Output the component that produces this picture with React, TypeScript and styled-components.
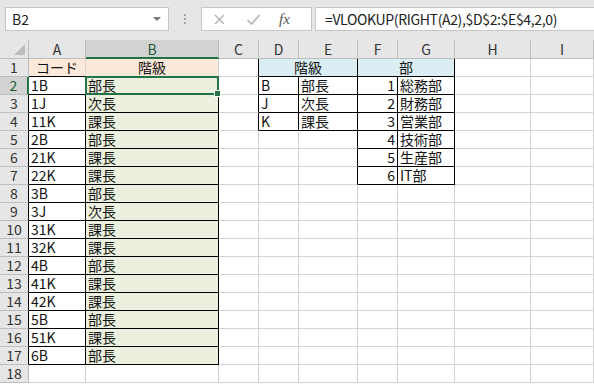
import styled, { createGlobalStyle } from "styled-components";

const GlobalStyle = createGlobalStyle`
  html, body {
    margin: 0;
    padding: 0;
    background: #ffffff;
    overflow: hidden;
  }
  body {
    font-family: "Noto Sans CJK JP", "Noto Sans", sans-serif;
  }
`;

const GREEN = "#217346";
const GRID = "#d4d4d4";
const HEAD_LINE = "#bdbdbd";

const Page = styled.div`
  width: 594px;
  height: 385px;
  overflow: hidden;
  background: #ffffff;
`;

const FormulaBar = styled.div`
  display: flex;
  align-items: flex-start;
  height: 40px;
  padding: 7px 0 0 5px;
  box-sizing: border-box;
  background: #e6e6e6;
`;

const NameBox = styled.div`
  position: relative;
  width: 164px;
  height: 24px;
  box-sizing: border-box;
  border: 1px solid #c6c6c6;
  background: #ffffff;
  padding-left: 6px;
  font-size: 14px;
  line-height: 22px;
  color: #222;
`;

const DropArrow = styled.span`
  position: absolute;
  right: 7px;
  top: 9px;
  width: 0;
  height: 0;
  border-left: 4px solid transparent;
  border-right: 4px solid transparent;
  border-top: 4px solid #777;
`;

const Grip = styled.div`
  width: 32px;
  height: 24px;
  display: flex;
  flex-direction: column;
  align-items: center;
  justify-content: center;
  gap: 2px;
`;

const GripDot = styled.span`
  width: 2px;
  height: 2px;
  background: #a6a6a6;
`;

const IconBox = styled.div`
  width: 111px;
  height: 24px;
  box-sizing: border-box;
  border: 1px solid #c6c6c6;
  background: #ffffff;
  display: flex;
  align-items: center;
  padding-left: 11px;
  gap: 20px;
`;

const FxText = styled.span`
  font-family: "Liberation Serif", serif;
  font-style: italic;
  font-size: 15px;
  color: #555;
  margin-left: -2px;
`;

const FormulaInput = styled.div`
  flex: 1;
  height: 24px;
  margin-left: 3px;
  box-sizing: border-box;
  border: 1px solid #c6c6c6;
  border-right: none;
  background: #ffffff;
  padding-left: 9px;
  font-size: 14px;
  line-height: 22px;
  letter-spacing: -0.35px;
  color: #222;
  white-space: nowrap;
`;

const Sheet = styled.div`
  position: relative;
  display: grid;
  grid-template-columns: 29px 57px 133px 40px 40px 59px 40px 57px 76px 1fr;
  grid-auto-rows: 18px;
  grid-template-rows: 19px;
  font-size: 14px;
`;

const Corner = styled.div`
  position: relative;
  background: #e6e6e6;
  border-right: 1px solid ${HEAD_LINE};
  border-bottom: 1px solid ${HEAD_LINE};
  box-sizing: border-box;
`;

const CornerTriangle = styled.span`
  position: absolute;
  right: 3px;
  bottom: 3px;
  width: 0;
  height: 0;
  border-left: 11px solid transparent;
  border-bottom: 11px solid #bcbcbc;
`;

const ColHead = styled.div<{ $sel?: boolean }>`
  box-sizing: border-box;
  background: ${(p) => (p.$sel ? "#d2d2d2" : "#e6e6e6")};
  border-right: 1px solid ${HEAD_LINE};
  border-bottom: ${(p) => (p.$sel ? `2px solid ${GREEN}` : `1px solid ${HEAD_LINE}`)};
  color: ${(p) => (p.$sel ? "#1e5e3a" : "#333")};
  text-align: center;
  line-height: 18px;
`;

const RowHead = styled.div<{ $sel?: boolean; $edge: string }>`
  box-sizing: border-box;
  background: ${(p) => (p.$sel ? "#d2d2d2" : "#e6e6e6")};
  border-right: ${(p) => (p.$sel ? `2px solid ${GREEN}` : `1px solid ${p.$edge}`)};
  border-bottom: 1px solid ${HEAD_LINE};
  color: ${(p) => (p.$sel ? "#1e5e3a" : "#333")};
  text-align: center;
  line-height: 17px;
`;

const Cell = styled.div<{
  $fill: string;
  $align: string;
  $right: string;
  $bottom: string;
  $span: number;
}>`
  box-sizing: border-box;
  grid-column: span ${(p) => p.$span};
  background: ${(p) => p.$fill};
  border-right: 1px solid ${(p) => p.$right};
  border-bottom: 1px solid ${(p) => p.$bottom};
  text-align: ${(p) => p.$align};
  padding: 0 2px 0 2px;
  line-height: 17px;
  color: #111;
  white-space: nowrap;
`;

const Selection = styled.div`
  position: absolute;
  left: 85px;
  top: 36px;
  width: 134px;
  height: 19px;
  box-sizing: border-box;
  border: 2px solid ${GREEN};
  pointer-events: none;
`;

const FillHandle = styled.span`
  position: absolute;
  right: -4px;
  bottom: -4px;
  width: 5px;
  height: 5px;
  background: ${GREEN};
  border: 1px solid #ffffff;
`;

const COLS = ["A", "B", "C", "D", "E", "F", "G", "H", "I"];

const codes = ["1B", "1J", "11K", "2B", "21K", "22K", "3B", "3J", "31K", "32K", "4B", "41K", "42K", "5B", "51K", "6B"];
const titles = ["部長", "次長", "課長", "部長", "課長", "課長", "部長", "次長", "課長", "課長", "部長", "課長", "課長", "部長", "課長", "部長"];
const lookup = [["B", "部長"], ["J", "次長"], ["K", "課長"]];
const depts = ["総務部", "財務部", "営業部", "技術部", "生産部", "IT部"];

const PEACH = "#fde9d9";
const OLIVE = "#ebf1de";
const SKY = "#daeef3";

type CellDef = { text: string; col: number; span: number; fill: string; align: string };

const rowCells = (r: number): CellDef[] => {
  const cells: CellDef[] = [];
  const put = (col: number, text: string, fill = "#ffffff", align = "left", span = 1) =>
    cells.push({ col, text, fill, align, span });

  if (r === 1) {
    put(1, "コード", PEACH, "center");
    put(2, "階級", PEACH, "center");
    put(3, "");
    put(4, "階級", SKY, "center", 2);
    put(6, "部", SKY, "center", 2);
  } else if (r <= 17) {
    put(1, codes[r - 2]);
    put(2, titles[r - 2], OLIVE);
    put(3, "");
    const lk = lookup[r - 2];
    put(4, lk ? lk[0] : "");
    put(5, lk ? lk[1] : "");
    const dp = depts[r - 2];
    put(6, dp ? String(r - 1) : "", "#ffffff", "right");
    put(7, dp ?? "");
  } else {
    [1, 2, 3, 4, 5, 6, 7].forEach((c) => put(c, ""));
  }
  put(8, "");
  put(9, "");
  return cells;
};

const rightBlack = (r: number, c: number) => {
  if (c === 0 || c === 1 || c === 2) return r >= 2 && r <= 17;
  if (c === 3) return r >= 1 && r <= 4;
  if (c === 4) return r >= 2 && r <= 4;
  if (c === 5) return r >= 1 && r <= 7;
  if (c === 6) return r >= 2 && r <= 7;
  if (c === 7) return r >= 1 && r <= 7;
  return false;
};

const bottomBlack = (r: number, c: number) => {
  if (c === 1 || c === 2) return r >= 1 && r <= 17;
  if (c === 4 || c === 5) return r >= 1 && r <= 4;
  if (c === 6 || c === 7) return r >= 1 && r <= 7;
  return false;
};

const App = () => {
  const rows = Array.from({ length: 18 }, (_, i) => i + 1);

  return (
    <Page>
      <GlobalStyle />
      <FormulaBar>
        <NameBox>
          B2
          <DropArrow />
        </NameBox>
        <Grip>
          <GripDot />
          <GripDot />
          <GripDot />
        </Grip>
        <IconBox>
          <svg width="13" height="13" viewBox="0 0 13 13">
            <path d="M2 2 L11 11 M11 2 L2 11" stroke="#b3b3b3" strokeWidth="1.4" fill="none" />
          </svg>
          <svg width="15" height="13" viewBox="0 0 15 13">
            <path d="M1.5 7 L5.5 11 L13.5 2" stroke="#b3b3b3" strokeWidth="1.6" fill="none" />
          </svg>
          <FxText>fx</FxText>
        </IconBox>
        <FormulaInput>=VLOOKUP(RIGHT(A2),$D$2:$E$4,2,0)</FormulaInput>
      </FormulaBar>
      <Sheet>
        <Corner>
          <CornerTriangle />
        </Corner>
        {COLS.map((c) => (
          <ColHead key={c} $sel={c === "B"}>
            {c}
          </ColHead>
        ))}
        {rows.map((r) => [
          <RowHead key={`h${r}`} $sel={r === 2} $edge={rightBlack(r, 0) ? "#000" : HEAD_LINE}>
            {r}
          </RowHead>,
          ...rowCells(r).map((cell) => {
            const last = cell.col + cell.span - 1;
            return (
              <Cell
                key={`${r}-${cell.col}`}
                $fill={cell.fill}
                $align={cell.align}
                $span={cell.span}
                $right={rightBlack(r, last) ? "#000" : GRID}
                $bottom={bottomBlack(r, cell.col) ? "#000" : GRID}
              >
                {cell.text}
              </Cell>
            );
          }),
        ])}
        <Selection>
          <FillHandle />
        </Selection>
      </Sheet>
    </Page>
  );
};

export default App;
